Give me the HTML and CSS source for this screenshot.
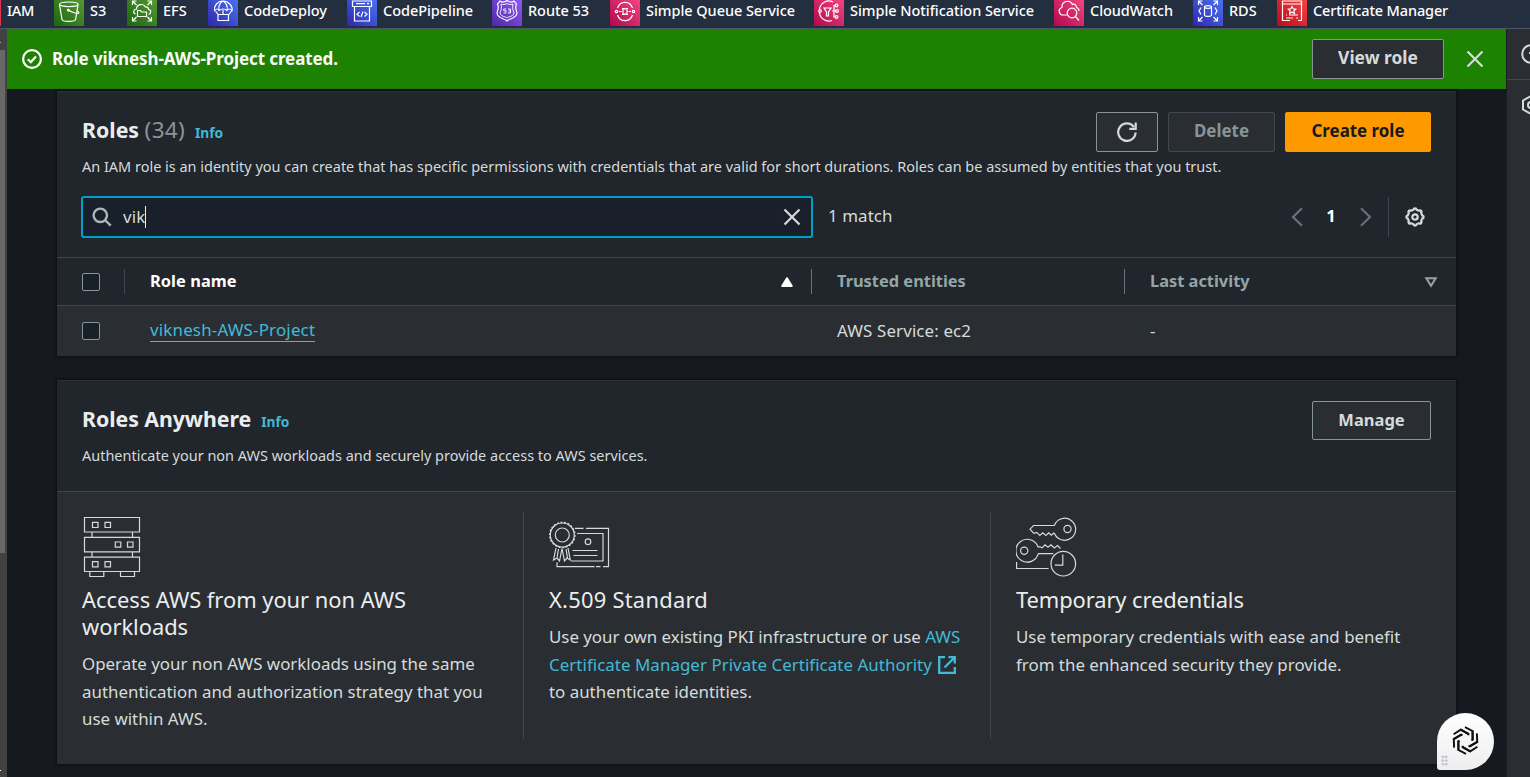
FILE: index.html
```html
<!DOCTYPE html>
<html lang="en">
<head>
<meta charset="utf-8">
<title>IAM Roles</title>
<link rel="stylesheet" href="styles.css">
</head>
<body>
<svg class="defs" width="0" height="0">
  <linearGradient id="g-green" x1="0" y1="1" x2="1" y2="0"><stop offset="0" stop-color="#1b660f"/><stop offset="1" stop-color="#5a9c35"/></linearGradient>
  <linearGradient id="g-blue" x1="0" y1="1" x2="1" y2="0"><stop offset="0" stop-color="#2e27ad"/><stop offset="1" stop-color="#4d76f5"/></linearGradient>
  <linearGradient id="g-purple" x1="0" y1="1" x2="1" y2="0"><stop offset="0" stop-color="#4d27a8"/><stop offset="1" stop-color="#945cf5"/></linearGradient>
  <linearGradient id="g-pink" x1="0" y1="1" x2="1" y2="0"><stop offset="0" stop-color="#b0084d"/><stop offset="1" stop-color="#f84a84"/></linearGradient>
  <linearGradient id="g-red" x1="0" y1="1" x2="1" y2="0"><stop offset="0" stop-color="#bd0816"/><stop offset="1" stop-color="#f54a4b"/></linearGradient>
</svg>

<nav class="favorites">
  <a class="fav fav-first"><span>IAM</span></a>
  <a class="fav"><svg viewBox="0 0 30 30"><rect width="30" height="30" fill="url(#g-green)"/><ellipse cx="14.8" cy="8.3" rx="9.3" ry="2.3"/><path d="M5.5 8.5 8 23.5c.4 2.4 13.2 2.4 13.6 0L24 8.5M14.5 14.2c2 1.300 8 3.700 10 3.200 1-.5-1-2.500-2-3"/><circle cx="14.300" cy="14.200" r=".8"/></svg><span>S3</span></a>
  <a class="fav"><svg viewBox="0 0 30 30"><rect width="30" height="30" fill="url(#g-green)"/><path d="M5.500 9V5h4M5.500 5l4 4M24.500 9V5h-4M24.500 5l-4 4M5.500 21v4h4M5.500 25l4-4M24.500 21v4h-4M24.500 25l-4-4M8.500 18c-3-1-2-5 1-5 0-5 7-6 9-2 2-.5 3 1 3 2.500 3 0 3 4 0 5M10.500 20.500v-6h3l1 1.500h5v4.500z"/></svg><span>EFS</span></a>
  <a class="fav"><svg viewBox="0 0 30 30"><rect width="30" height="30" fill="url(#g-blue)"/><path d="M6.500 14.500c-1-4 3-9.500 8.500-9.500s10 5.500 9 9.500c-2-2-4-2-5 0-2-2-6-2-8 0-1-2-3-2-4.500 0zM11 14.500c-1-4 1-8 4-9.500M19 14.500c1-4-1-8-4-9.500M7.500 15l3 4M23.500 15l-3 4M15 14v4M10 18.500h10.500v6H10z"/></svg><span>CodeDeploy</span></a>
  <a class="fav"><svg viewBox="0 0 30 30"><rect width="30" height="30" fill="url(#g-blue)"/><path d="M5.500 5h19v5.500h-19zM7.500 10.500V25h15V10.500M9 7.700h9M20 7.700h2M12.500 16l-2.500 2.300 2.500 2.200M17.500 16l2.500 2.300-2.500 2.200M16 15.500l-2 5.500"/></svg><span>CodePipeline</span></a>
  <a class="fav"><svg viewBox="0 0 30 30"><rect width="30" height="30" fill="url(#g-purple)"/><path d="M8 5c2 1.500 5 1 7-.5 2 1.500 5 2 7 .5l2.500 3c-2 4 0 6 .5 9-1 6-7 5-10 8-3-3-9-2-10-8 .5-3 2.500-5 .5-9z"/><path d="M9 8c2 1 4 .5 6-.5 2 1 4 1.500 6 .5-1 4 0 6 1 9-1 4-5 3-7 5-2-2-6-1-7-5 1-3 2-5 1-9zM14.200 13h-2.500v1.700h2.300v2.300h-2.500M16 13h2.500v4H16M16.500 15h2" stroke-width=".9"/></svg><span>Route 53</span></a>
  <a class="fav"><svg viewBox="0 0 30 30"><rect width="30" height="30" fill="url(#g-pink)"/><circle cx="6.500" cy="15.500" r="1.200"/><circle cx="23.500" cy="15.500" r="1.200"/><path d="M7.500 12c2.500-7.500 12.500-7.500 15 0M7.500 19c2.500 7.500 12.500 7.500 15 0M9 15.500h2.500M18.500 15.500H21M12 12.500h2c.7.700 1.500.700 2 0h2M12 18.500h2c.7-.7 1.500-.7 2 0h2M13 13v5M17 13v5"/></svg><span>Simple Queue Service</span></a>
  <a class="fav"><svg viewBox="0 0 30 30"><rect width="30" height="30" fill="url(#g-pink)"/><path d="M18 24.500c-6 2-12-2-12.500-8M5.500 13.500C6 7 13 3 19 6M10 12h7l-2.500 4v4h-2v-4zM18 15h4M20 15V9.500h1.500M20 15v6h1.500"/><circle cx="6" cy="15" r="1.300"/><circle cx="22.500" cy="9.500" r="1.400"/><circle cx="23" cy="15" r="1.400"/><circle cx="22.500" cy="21" r="1.400"/></svg><span>Simple Notification Service</span></a>
  <a class="fav"><svg viewBox="0 0 30 30"><rect width="30" height="30" fill="url(#g-pink)"/><path d="M13 19H9c-4 0-5.500-6-1-7.500C7.500 5 16 3 18.500 8.500c2-1 4 .5 4 3 1.700.5 2.500 2 2.500 3.500M21.500 20.500l3.500 4"/><circle cx="18" cy="17" r="4.800"/></svg><span>CloudWatch</span></a>
  <a class="fav"><svg viewBox="0 0 30 30"><rect width="30" height="30" fill="url(#g-blue)"/><path d="M5.500 9V5h4M5.500 5l4 4M24.500 9V5h-4M24.500 5l-4 4M5.500 21v4h4M5.500 25l4-4M24.500 21v4h-4M24.500 25l-4-4M8 11.500 6 15l2 3.500M22 11.500l2 3.500-2 3.500M11.500 11v8.500c1 1.300 6 1.300 7 0V11"/><ellipse cx="15" cy="11" rx="3.500" ry="1.300"/></svg><span>RDS</span></a>
  <a class="fav fav-cert"><svg viewBox="0 0 30 30"><rect width="30" height="30" fill="url(#g-red)"/><path d="M13 24.500H5.500V5h19v19.500H21M5.500 8h19M15 10.500l1.200 2.300 2.500.3-1.800 1.700.5 2.500-2.400-1.200-2.300 1.200.4-2.500-1.800-1.700 2.500-.3zM9 19h1M12 19h9M9 22h7M19 22h2"/></svg><span>Certificate Manager</span></a>
</nav>

<div class="shell">
  <aside class="scrollbar"><i class="tick"></i><div class="thumb"></div><i class="tick tick-end"></i></aside>

  <main class="main">
    <div class="flash">
      <svg class="ico20" viewBox="0 0 20 20"><circle cx="10" cy="10" r="8.900"/><path d="M5.800 10.200l3 2.900 5.200-5.700"/></svg>
      <p>Role viknesh-AWS-Project created.</p>
      <button class="btn btn-view">View role</button>
      <svg class="flash-close" viewBox="0 0 18 18"><path d="M1.500 1.500l15 15M16.500 1.500l-15 15"/></svg>
    </div>

    <section class="panel roles">
      <header class="panel-head">
        <div class="title-row">
          <h2>Roles <span class="count">(34)</span></h2><a class="info">Info</a>
          <div class="actions">
            <button class="btn btn-refresh"><svg class="ico20" viewBox="0 0 20 20"><path d="M18.600 10.500A8.700 8.700 0 1 1 16.900 5M18.700.5v6.400h-6.400"/></svg></button>
            <button class="btn btn-disabled">Delete</button>
            <button class="btn btn-primary">Create role</button>
          </div>
        </div>
        <p class="desc">An IAM role is an identity you can create that has specific permissions with credentials that are valid for short durations. Roles can be assumed by entities that you trust.</p>
        <div class="tools">
          <div class="search">
            <svg class="lens" viewBox="0 0 20 20"><circle cx="8.300" cy="8.300" r="6.700"/><path d="M13 13l5.700 5.700"/></svg>
            <span class="query">vik</span><i class="caret"></i>
            <svg class="clear" viewBox="0 0 18 18"><path d="M1.500 1.500l15 15M16.500 1.500l-15 15"/></svg>
          </div>
          <span class="match">1 match</span>
          <div class="pager">
            <svg viewBox="0 0 12 20"><path d="M11 1.200 2 10l9 8.800"/></svg>
            <b>1</b>
            <svg viewBox="0 0 12 20"><path d="M1 1.200 10 10l-9 8.800"/></svg>
          </div>
          <div class="settings"><svg class="ico20" viewBox="0 0 20 20"><path id="gear" d="M8.400 2.800C8.600 .9 11.400 .9 11.600 2.800L14 3.800C15.500 2.600 17.400 4.500 16.200 6L17.200 8.400C19.100 8.600 19.100 11.400 17.200 11.600L16.200 14C17.400 15.500 15.500 17.400 14 16.200L11.600 17.200C11.400 19.100 8.600 19.100 8.400 17.200L6 16.200C4.500 17.400 2.600 15.500 3.800 14L2.800 11.600C.9 11.400 .9 8.600 2.800 8.400L3.800 6C2.600 4.500 4.500 2.600 6 3.800z"/><circle cx="10" cy="10" r="2.700"/></svg></div>
        </div>
      </header>
      <div class="grid-row row-head">
        <div class="check"><i></i></div>
        <div class="cell sorted"><span>Role name</span><svg class="sort" viewBox="0 0 14 12"><path d="M7 2.200 11.800 10h-9.600z" fill="#fff" stroke="#fff" stroke-linejoin="round"/></svg></div>
        <div class="cell"><span class="trusted">Trusted entities</span></div>
        <div class="cell last"><span>Last activity</span><svg class="sort" viewBox="0 0 14 12"><path d="M7 9.800 2.300 2.200h9.400z"/></svg></div>
      </div>
      <div class="grid-row row-body">
        <div class="check"><i></i></div>
        <div class="cell"><a class="role-link">viknesh-AWS-Project</a></div>
        <div class="cell"><span class="svc">AWS Service: ec2</span></div>
        <div class="cell"><span>-</span></div>
      </div>
    </section>

    <section class="panel anywhere">
      <header class="panel-head">
        <div class="title-row">
          <h2 class="h2-any">Roles Anywhere</h2><a class="info">Info</a>
          <div class="actions"><button class="btn btn-manage">Manage</button></div>
        </div>
        <p class="desc">Authenticate your non AWS workloads and securely provide access to AWS services.</p>
      </header>
      <div class="features">
        <article>
          <svg class="art" viewBox="82 515 62 64"><path d="M84.500 517.500h55v14.500h-55zM84.500 537.300h55v14.500h-55zM84.500 557.200h55v14.300h-55zM92 532v5M132.500 532v5M92 552v5M132.500 552v5M89.800 571.500v5h14v-5M120.500 571.500v5h14v-5M92.500 522.300h5.500v5.200h-5.500zM105 522.300h5.500v5.200H105zM115.300 542h5.500v5.200h-5.500zM127.500 542h5.500v5.200h-5.500zM92.500 561.700h5.500v5.200h-5.500zM105 561.700h5.500v5.200H105z"/></svg>
          <h3>Access AWS from your non AWS<br>workloads</h3>
          <p>Operate your non AWS workloads using the same<br>authentication and authorization strategy that you<br>use within AWS.</p>
        </article>
        <article>
          <svg class="art" viewBox="549 515 62 64"><circle cx="562.300" cy="535" r="12"/><circle class="scallop" cx="562.300" cy="535" r="12.700"/><circle cx="562.300" cy="535" r="7"/><path d="M575 528.300h8.500M586 528.300h22.500v38.400h-5.500M600.500 566.700h-4.500M594.500 566.700h-37.500v-4.500M577 533.500h26v27.500h-32M572.500 550.500h25M573.500 555.500h24M556 548l-2.500 12 3.500-2 2.500 3 2.500-12.500 2.500 12.500 2.500-3 3.300 2-2.300-12M558.500 549l-1.500 9M566 549l1.500 9"/><circle cx="588" cy="541.700" r="2.800"/></svg>
          <h3 class="h3-x">X.509 Standard</h3>
          <p><span class="pki">Use your own existing PKI infrastructure or use <a>AWS</a></span><br><a class="pca">Certificate Manager Private Certificate Authority</a> <svg class="ext" viewBox="0 0 18 18"><path d="M7 1.200H1.200v15.600h15.600V11M10.500 1.200h6.300v6.300M16.500 1.500 6.500 11.500"/></svg><br>to authenticate identities.</p>
        </article>
        <article>
          <svg class="art" viewBox="1016 515 62 64"><path d="M1054.300 525.500A11 11 0 1 1 1054.300 533M1054.300 525.500h-20.800l-3.500 3.700 3.800 4.200 3-1 3 3 3-2.500 3 2.500 3-2.500 2.500 2.200 2.800-2.300M1038.300 553.700A11.400 11.400 0 1 1 1038 546.800h2l2 1 3-3 3 2.500 3-2.500 3.300 3.200 3.200-2.500 3 3M1038.300 553.700h15M1062.800 554.500v10.700h-8M1016.600 562v6.500h32"/><circle cx="1067.500" cy="529" r="3.600"/><circle cx="1024.200" cy="550.700" r="3.600"/><circle cx="1063.300" cy="563.700" r="12.300"/></svg>
          <h3 class="h3-t">Temporary credentials</h3>
          <p>Use temporary credentials with ease and benefit<br>from the enhanced security they provide.</p>
        </article>
      </div>
    </section>
  </main>

  <aside class="toolbar">
    <div class="tool"><svg viewBox="0 0 20 20"><circle cx="10" cy="10" r="8.800"/><path d="M10 5v2M8 9h2v5.500"/></svg></div>
    <div class="tool"><svg viewBox="0 0 20 20"><path d="M10 1 18 5.500v9L10 19 2 14.500v-9z"/><circle cx="10" cy="10" r="3"/></svg></div>
  </aside>
</div>

<div class="assistant">
  <svg viewBox="-15 -15 30 30">
    <path id="arm" d="M-.5-13 6.800-9.200V-.5"/>
    <use href="#arm" transform="rotate(60)"/><use href="#arm" transform="rotate(120)"/><use href="#arm" transform="rotate(180)"/><use href="#arm" transform="rotate(240)"/><use href="#arm" transform="rotate(300)"/>
    <path id="inner" d="M-5-10.800 2.800-6.500V-5"/>
    <use href="#inner" transform="rotate(60)"/><use href="#inner" transform="rotate(120)"/><use href="#inner" transform="rotate(180)"/><use href="#inner" transform="rotate(240)"/><use href="#inner" transform="rotate(300)"/>
  </svg>
  <i class="grip"></i>
</div>
</body>
</html>
```
FILE: styles.css
```css
* { box-sizing: border-box; }
body { margin: 0; height: 777px; overflow: hidden; display: flex; flex-direction: column; background: #161920; color: #d5dbdb; font: 400 16.9px/27.5px "Noto Sans", sans-serif; position: relative; }
h2, h3, p { margin: 0; }
svg { display: block; fill: none; stroke: currentColor; flex: none; }
.defs { position: absolute; }

.favorites { display: grid; grid-template-columns: 54px 73px 81px 139px 145px 118px 204px 240px 139px 84px 1fr; height: 29px; flex: none; background: #232f3e; border-bottom: 1px solid #4c5664; overflow: hidden; }
.fav { display: flex; gap: 6px; height: 30px; margin-top: -4px; color: #fff; font-size: 14.5px; font-weight: 500; letter-spacing: -.05px; line-height: 29px; white-space: nowrap; }
.fav svg { width: 30px; height: 30px; stroke-width: 1.2; }
.fav svg rect { stroke: none; }
.fav-first { border-left: 1px solid #dd344c; padding-left: 6px; letter-spacing: -.3px; }
.fav-cert { letter-spacing: -.14px; }

.shell { display: flex; flex: 1; min-height: 0; }
.scrollbar { width: 7px; background: #424242; display: flex; flex-direction: column; }
.thumb { width: 5px; height: 503px; background: #686868; margin-top: 7px; }
.tick { width: 1px; height: 1px; background: #aaa; margin-top: 13px; }
.tick-end { margin: auto 0 6px; background: #fff; }
.main { flex: 1; }
.toolbar { width: 24px; background: #2a2e33; border-left: 1px solid #1a1c21; overflow: hidden; }
.tool { height: 51px; border-bottom: 1px solid #414750; padding: 15px 0 0 14px; }
.tool + .tool { border: 0; }
.tool svg { width: 20px; height: 20px; stroke-width: 2; }

.flash { height: 60px; background: #1d8102; display: flex; align-items: center; padding: 0 22px 0 15px; color: #fff; }
.ico20 { width: 20px; height: 20px; stroke-width: 2.2; }
.flash p { margin-left: 10px; font-size: 17px; font-weight: 700; letter-spacing: -.09px; color: #fafafa; flex: 1; }
.flash-close { width: 18px; height: 18px; stroke-width: 2.2; margin-left: 22px; color: #d5dbdb; }

.btn { height: 40px; padding: 0; border: 1px solid #879596; border-radius: 2px; background: #2a2e33; color: #d5dbdb; font: 700 16.9px/36px "Noto Sans", sans-serif; display: flex; justify-content: center; }
.btn-view { width: 132px; font-size: 17.4px; line-height: 35px; }
.btn-refresh { width: 62px; align-items: center; }
.btn-disabled { width: 107px; border-color: #414750; color: #879596; }
.btn-primary { width: 146px; border-color: #f90; background: #f90; color: #16191f; }
.btn-manage { width: 119px; font-size: 16.5px; height: 39px; }

.panel { margin: 0 50px; background: #2a2e33; box-shadow: 0 0 2px 1px #0c0e12; }
.roles { margin-top: 2px; height: 265px; border-top: 1px solid #2c3037; }
.anywhere { margin-top: 24px; height: 384px; border-top: 1px solid #2c3037; }
.panel-head { background: #21252c; border-bottom: 1px solid #414750; padding: 20px 25px 0; height: 166px; }
.anywhere .panel-head { height: 111px; }
.title-row { display: flex; height: 40px; }
h2 { font-size: 21.3px; font-weight: 700; line-height: 35px; color: #eaeded; }
.h2-any { letter-spacing: -.05px; }
.count { font-weight: 400; font-size: 22.5px; color: #879596; letter-spacing: .3px; }
.info { margin-left: 10px; font-size: 13.7px; font-weight: 700; line-height: 42px; color: #44b9d6; }
.actions { display: flex; gap: 10px; margin-left: auto; }
.desc { font-size: 14.48px; line-height: 29px; white-space: nowrap; }
.tools { display: flex; margin: 15px 0 0 -1px; height: 42px; align-items: center; }
.search { width: 732px; height: 42px; border: 2px solid #00a1c9; border-radius: 3px; background: #1a2029; display: flex; align-items: center; padding: 0 10px 0 9px; }
.lens { width: 20px; height: 20px; stroke-width: 2.4; color: #aab7b8; }
.query { margin-left: 11px; letter-spacing: .1px; }
.caret { width: 1px; height: 22px; background: #eaeded; }
.clear { width: 18px; height: 18px; margin-left: auto; stroke-width: 2.2; }
.match { margin-left: 15px; line-height: 40px; height: 42px; letter-spacing: .08px; }
.pager { display: flex; align-items: center; margin-left: auto; color: #687078; height: 42px; }
.pager svg { width: 12px; height: 20px; stroke-width: 2.2; }
.pager b { width: 57px; padding-right: 1px; text-align: center; color: #fff; font-size: 16.5px; line-height: 40px; height: 42px; }
.settings { height: 40px; margin-left: 16px; padding: 10px 6px 0 16px; border-left: 1px solid #414750; }

.grid-row { display: grid; grid-template-columns: 67px 687px 313px 1fr; align-items: center; }
.row-head { height: 48px; background: #21252c; border-bottom: 1px solid #414750; font-size: 16.4px; font-weight: 700; color: #95a5a6; }
.row-body { height: 50px; }
.check { padding-left: 25px; }
.check i { display: block; width: 18px; height: 18px; border: 1px solid #879596; border-radius: 2px; background: #1a2029; }
.row-head .check i { margin-top: 1px; }
.cell { display: flex; align-items: center; justify-content: space-between; height: 25px; border-left: 1px solid transparent; padding: 0 17px 0 25px; line-height: 23px; }
.cell span { margin-top: -2px; }
.row-head .cell { border-color: #687078; }
.row-head .sorted { border-color: #414750; color: #fff; letter-spacing: .06px; }
.row-head .last { padding-right: 18px; }
.sort { width: 14px; height: 12px; stroke-width: 2; }
.role-link { color: #44b9d6; border-bottom: 1px solid #44b9d6; letter-spacing: .19px; line-height: 22px; margin-top: -2px; }
.svc { letter-spacing: .13px; }

.features { display: grid; grid-template-columns: 466px 467px 1fr; padding-top: 20px; }
.features article { height: 227px; padding: 3px 0 0 25px; border-left: 1px solid #414750; white-space: nowrap; }
.features article:first-child { border-left: 0; }
.art { width: 62px; height: 64px; stroke-width: 1.2; }
.scallop { stroke-dasharray: 2 1.6; }
h3 { margin-top: 7px; font-size: 21.9px; font-weight: 400; line-height: 27px; color: #eaeded; letter-spacing: -.03px; }
.h3-x { letter-spacing: .25px; }
.h3-t { letter-spacing: -.09px; }
.features p { margin-top: 10px; }
.features p a { color: #44b9d6; }
.pki { letter-spacing: -.03px; }
.pca { letter-spacing: .05px; }
.ext { display: inline-block; width: 18px; height: 18px; margin-left: 1.500px; stroke-width: 2.3; color: #44b9d6; vertical-align: -3px; }

.assistant { position: absolute; left: 1437px; top: 713px; width: 57px; height: 57px; border-radius: 50% 50% 50% 3px; background: linear-gradient(#fff, #eee); display: flex; align-items: center; justify-content: center; color: #111; padding: 0 1px 3px 0; }
.assistant svg { width: 31px; height: 31px; stroke-width: 1.9; }
.grip { position: absolute; left: 4px; bottom: 4px; width: 7px; height: 11px; background: radial-gradient(circle, #b9bccb 1.2px, transparent 1.500px) 0 0 / 3.500px 3.700px; }
```
